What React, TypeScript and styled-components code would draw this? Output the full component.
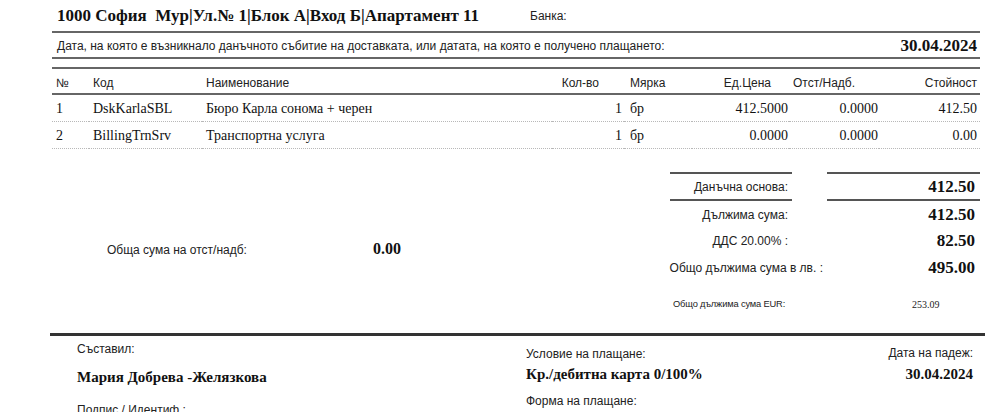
import React from "react";
import styled, { createGlobalStyle } from "styled-components";

const Global = createGlobalStyle`
  html, body { margin: 0; padding: 0; background: #fff; }
  body { color: #111; font-family: "Liberation Sans", Arial, sans-serif; overflow: hidden; }
  * { box-sizing: border-box; }
`;

const SANS = `"Liberation Sans", Arial, sans-serif`;
const SERIF = `"Liberation Serif", "Times New Roman", serif`;

const Page = styled.div`
  width: 1000px;
  height: 412px;
  overflow: hidden;
  background: #fff;
`;

const Sheet = styled.div`
  width: 928px;
  margin-left: 52px;
  display: flex;
  flex-direction: column;
`;

const TopRow = styled.div`
  height: 31px;
  display: flex;
  align-items: center;
  padding-left: 5px;
`;

const Company = styled.div`
  font-family: ${SERIF};
  font-weight: bold;
  font-size: 17px;
  width: 473px;
  white-space: pre;
`;

const SmallLabel = styled.div`
  font-family: ${SANS};
  font-size: 12px;
  color: #222;
`;

const DateRow = styled.div`
  height: 28px;
  border-top: 2px solid #666;
  border-bottom: 2px solid #666;
  display: flex;
  align-items: center;
  justify-content: space-between;
  padding: 1px 3px 0 5px;
`;

const BoldSerif = styled.div<{ $size?: number }>`
  font-family: ${SERIF};
  font-weight: bold;
  font-size: ${(p) => p.$size ?? 17}px;
  color: #111;
  white-space: nowrap;
`;

const Table = styled.div`
  margin-top: 8px;
  display: grid;
  grid-template-columns: 37px 113px 350px 72px 68px 97px 90px 101px;
`;

const HeadCell = styled.div<{ $align?: string; $pad?: string }>`
  height: 28px;
  border-top: 2px solid #666;
  border-bottom: 2px solid #666;
  display: flex;
  align-items: center;
  justify-content: ${(p) => p.$align ?? "flex-start"};
  padding: ${(p) => p.$pad ?? "3px 0 0 4px"};
  font-family: ${SANS};
  font-size: 12px;
  color: #222;
  white-space: nowrap;
`;

const Cell = styled.div<{ $align?: string; $pad?: string }>`
  height: 27px;
  border-bottom: 1px dotted #b8b8b8;
  display: flex;
  align-items: center;
  justify-content: ${(p) => p.$align ?? "flex-start"};
  padding: ${(p) => p.$pad ?? "1px 0 0 4px"};
  font-family: ${SERIF};
  font-size: 14px;
  color: #111;
  white-space: nowrap;
`;

const Summary = styled.div`
  height: 184px;
  display: flex;
  justify-content: space-between;
  align-items: flex-start;
`;

const Discount = styled.div`
  display: flex;
  align-items: center;
  height: 20px;
  margin: 90px 0 0 55px;
`;

const DiscountLabel = styled.div`
  font-family: ${SANS};
  font-size: 12px;
  color: #222;
  width: 266px;
  padding-top: 1px;
`;

const Totals = styled.div`
  display: flex;
  flex-direction: column;
  padding-top: 23px;
  width: 313px;
`;

const TotalRow = styled.div<{ $h: number }>`
  display: flex;
  height: ${(p) => p.$h}px;
`;

const TotalLabel = styled.div<{ $w: number; $ml: number; $lined?: boolean }>`
  width: ${(p) => p.$w}px;
  margin-left: ${(p) => p.$ml}px;
  display: flex;
  align-items: center;
  justify-content: flex-end;
  padding-right: 4px;
  font-family: ${SANS};
  font-size: 12px;
  color: #222;
  white-space: nowrap;
  border-top: ${(p) => (p.$lined ? "2px solid #555" : "none")};
  border-bottom: ${(p) => (p.$lined ? "2px solid #555" : "none")};
`;

const TotalValue = styled.div<{ $ml: number; $lined?: boolean }>`
  flex: 1;
  margin-left: ${(p) => p.$ml}px;
  display: flex;
  align-items: center;
  justify-content: flex-end;
  padding-right: 5px;
  border-top: ${(p) => (p.$lined ? "2px solid #555" : "none")};
  border-bottom: ${(p) => (p.$lined ? "2px solid #555" : "none")};
`;

const EurRow = styled.div`
  display: flex;
  align-items: center;
  height: 22px;
  margin-top: 11px;
  padding-left: 6px;
`;

const EurLabel = styled.div`
  font-family: ${SANS};
  font-size: 9.3px;
  color: #222;
  width: 239px;
  letter-spacing: -0.15px;
`;

const EurValue = styled.div`
  font-family: ${SERIF};
  font-size: 10px;
  color: #222;
`;

const Footer = styled.div`
  margin: 0 -5px 0 -2px;
  border-top: 3px solid #333;
  display: grid;
  grid-template-columns: 449px 1fr auto;
  padding: 6px 12px 0 27px;
`;

const FooterCol = styled.div<{ $align?: string; $pt?: number }>`
  display: flex;
  flex-direction: column;
  align-items: ${(p) => p.$align ?? "flex-start"};
  padding-top: ${(p) => p.$pt ?? 0}px;
`;

const FooterLabel = styled.div<{ $mt?: number }>`
  font-family: ${SANS};
  font-size: 12px;
  color: #222;
  margin-top: ${(p) => p.$mt ?? 0}px;
  line-height: 14px;
  white-space: nowrap;
`;

const FooterValue = styled(BoldSerif)<{ $mt?: number }>`
  margin-top: ${(p) => p.$mt ?? 0}px;
  line-height: 18px;
`;

type Item = {
  n: string;
  code: string;
  name: string;
  qty: string;
  unit: string;
  price: string;
  disc: string;
  total: string;
};

const items: Item[] = [
  { n: "1", code: "DskKarlaSBL", name: "Бюро Карла сонома + черен", qty: "1", unit: "бр", price: "412.5000", disc: "0.0000", total: "412.50" },
  { n: "2", code: "BillingTrnSrv", name: "Транспортна услуга", qty: "1", unit: "бр", price: "0.0000", disc: "0.0000", total: "0.00" },
];

export default function App() {
  return (
    <Page>
      <Global />
      <Sheet>
        <TopRow>
          <Company>{"1000 София  Мур|Ул.№ 1|Блок А|Вход Б|Апартамент 11"}</Company>
          <SmallLabel>Банка:</SmallLabel>
        </TopRow>
        <DateRow>
          <SmallLabel>
            Дата, на която е възникнало данъчното събитие на доставката, или датата, на която е получено плащането:
          </SmallLabel>
          <BoldSerif>30.04.2024</BoldSerif>
        </DateRow>

        <Table>
          <HeadCell>№</HeadCell>
          <HeadCell>Код</HeadCell>
          <HeadCell>Наименование</HeadCell>
          <HeadCell $align="flex-end" $pad="3px 25px 0 0">Кол-во</HeadCell>
          <HeadCell $pad="3px 0 0 6px">Мярка</HeadCell>
          <HeadCell $align="flex-end" $pad="3px 18px 0 0">Ед.Цена</HeadCell>
          <HeadCell $pad="3px 0 0 4px">Отст/Надб.</HeadCell>
          <HeadCell $align="flex-end" $pad="3px 3px 0 0">Стойност</HeadCell>
          {items.map((it) => (
            <React.Fragment key={it.n}>
              <Cell>{it.n}</Cell>
              <Cell>{it.code}</Cell>
              <Cell>{it.name}</Cell>
              <Cell $align="flex-end" $pad="1px 2px 0 0">{it.qty}</Cell>
              <Cell $pad="1px 0 0 6px">{it.unit}</Cell>
              <Cell $align="flex-end" $pad="1px 1px 0 0">{it.price}</Cell>
              <Cell $align="flex-end" $pad="1px 1px 0 0">{it.disc}</Cell>
              <Cell $align="flex-end" $pad="1px 3px 0 0">{it.total}</Cell>
            </React.Fragment>
          ))}
        </Table>

        <Summary>
          <Discount>
            <DiscountLabel>Обща сума на отст/надб:</DiscountLabel>
            <BoldSerif $size={16}>0.00</BoldSerif>
          </Discount>
          <Totals>
            <TotalRow $h={29}>
              <TotalLabel $w={122} $ml={3} $lined>Данъчна основа:</TotalLabel>
              <TotalValue $ml={35} $lined>
                <BoldSerif>412.50</BoldSerif>
              </TotalValue>
            </TotalRow>
            <TotalRow $h={27}>
              <TotalLabel $w={122} $ml={3}>Дължима сума:</TotalLabel>
              <TotalValue $ml={35}>
                <BoldSerif>412.50</BoldSerif>
              </TotalValue>
            </TotalRow>
            <TotalRow $h={26}>
              <TotalLabel $w={122} $ml={3}>ДДС 20.00% :</TotalLabel>
              <TotalValue $ml={35}>
                <BoldSerif>82.50</BoldSerif>
              </TotalValue>
            </TotalRow>
            <TotalRow $h={28}>
              <TotalLabel $w={160} $ml={0}>Общо дължима сума в лв. :</TotalLabel>
              <TotalValue $ml={0}>
                <BoldSerif>495.00</BoldSerif>
              </TotalValue>
            </TotalRow>
            <EurRow>
              <EurLabel>Общо дължима сума EUR:</EurLabel>
              <EurValue>253.09</EurValue>
            </EurRow>
          </Totals>
        </Summary>

        <Footer>
          <FooterCol>
            <FooterLabel>Съставил:</FooterLabel>
            <FooterValue $mt={12} $size={15}>Мария Добрева -Желязкова</FooterValue>
            <FooterLabel $mt={17}>Подпис / Идентиф.:</FooterLabel>
          </FooterCol>
          <FooterCol $pt={5}>
            <FooterLabel>Условие на плащане:</FooterLabel>
            <FooterValue $mt={4} $size={15}>Кр./дебитна карта 0/100%</FooterValue>
            <FooterLabel $mt={11}>Форма на плащане:</FooterLabel>
          </FooterCol>
          <FooterCol $align="flex-end" $pt={4}>
            <FooterLabel>Дата на падеж:</FooterLabel>
            <FooterValue $mt={5} $size={15}>30.04.2024</FooterValue>
          </FooterCol>
        </Footer>
      </Sheet>
    </Page>
  );
}
